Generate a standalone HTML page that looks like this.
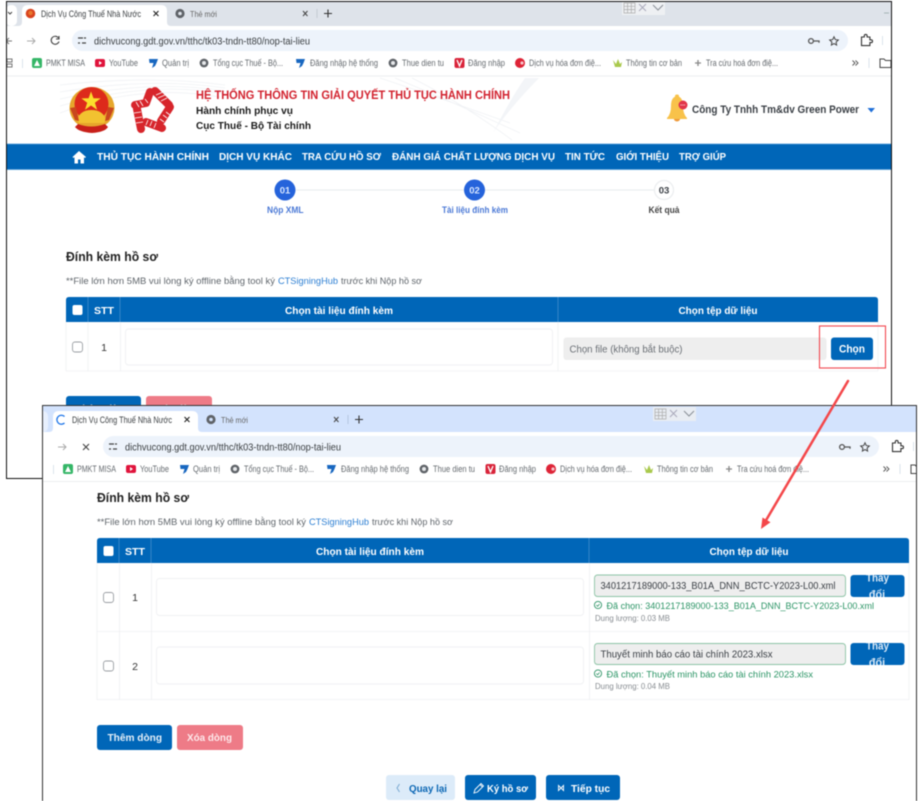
<!DOCTYPE html>
<html lang="vi">
<head>
<meta charset="utf-8">
<title>Dịch Vụ Công Thuế Nhà Nước</title>
<style>
html,body{margin:0;padding:0;background:#fff;width:923px;height:801px;overflow:hidden}
svg{display:block;position:absolute;left:0;top:0;filter:blur(.45px)}
text{font-family:"Liberation Sans",sans-serif;white-space:pre}
.b{font-weight:700}
.c{fill:#666b70;font-size:9px}
.g{fill:#60666c;font-size:9px}
.w{fill:#fff;font-weight:700;font-size:10.5px}
.n{fill:#fff;font-weight:700;font-size:10.5px}
.gi{fill:none;stroke:#555;stroke-width:1.3}
</style>
</head>
<body>
<svg width="923" height="801" viewBox="0 0 923 801" xmlns="http://www.w3.org/2000/svg">
<defs>
<clipPath id="w1"><rect x="6" y="1" width="886" height="478"/></clipPath>
<clipPath id="w2c"><rect x="11" y="0" width="875" height="76"/></clipPath>
<clipPath id="t1"><rect x="850" y="575" width="55" height="22" rx="3"/></clipPath>
<clipPath id="t2"><rect x="850" y="643" width="55" height="22" rx="3"/></clipPath>
</defs>
<rect width="923" height="801" fill="#fff"/>

<!-- WINDOW 1 -->
<g clip-path="url(#w1)">
<rect x="6" y="1" width="886" height="478" fill="#fff"/>
<rect x="6" y="1" width="886" height="25" fill="#dee3ea"/>
<rect x="6" y="5" width="11" height="21" rx="5" fill="#fff"/>
<path d="M8 12l2 2 2-2" fill="none" stroke="#444" stroke-width="1"/>
<path d="M18 26q4 0 4-4V11q0-6 6-6h133q6 0 6 6v11q0 4 4 4z" fill="#fff"/>
<circle cx="30.5" cy="13.5" r="4.8" fill="#d9431e"/><circle cx="30.5" cy="13" r="2.2" fill="#e8772c"/>
<text x="41" y="17" font-size="9.2" fill="#3c4043" textLength="100" lengthAdjust="spacingAndGlyphs">Dịch Vụ Công Thuế Nhà Nước</text>
<path d="M153.5 11l5 5M158.5 11l-5 5" stroke="#222" stroke-width="1.1"/>
<circle cx="180" cy="13.5" r="4.6" fill="#5f6368"/><circle cx="180" cy="13.5" r="1.8" fill="#dee3ea"/>
<text x="190" y="17" font-size="8.4" fill="#666" textLength="27" lengthAdjust="spacingAndGlyphs">Thẻ mới</text>
<path d="M303 11l4.500 5M307.500 11l-4.500 5" stroke="#444" stroke-width="1"/>
<path d="M317 9v9" stroke="#bfc5cc" stroke-width=".8"/>
<path d="M328 9.500v8M324 13.500h8" stroke="#333" stroke-width="1.100"/>
<rect x="622" y="2" width="43" height="13" fill="#eef0f3"/>
<path d="M624 3h11v10h-11zM624 6.300h11M624 9.600h11M627.600 3v10M631.300 3v10" fill="none" style="stroke:#aaa;stroke-width:.7"/>
<path d="M639 4l7 7M646 4l-7 7" stroke="#aab" stroke-width="1"/>
<path d="M653 5l5 5 5-5" fill="none" stroke="#8a8f96" stroke-width="1"/>
<path d="M884 13h5" stroke="#9aa" stroke-width=".8"/>
<rect x="6" y="26" width="886" height="25" fill="#fff"/>
<path d="M12 41h-5M9 38l-3 3 3 3" fill="none" stroke="#777" stroke-width="1"/>
<path d="M27 41h8M32 38l3 3-3 3" fill="none" stroke="#aaa" stroke-width="1"/>
<path d="M58.500 38a4 4 0 1 0 .5 3.500M59 36v3h-3" fill="none" stroke="#444" stroke-width="1.100"/>
<rect x="72" y="30" width="776" height="21" rx="10.500" fill="#edf3fb"/>
<path d="M78 38h5M84 38h2M78 43h2M82 43h4" stroke="#444" stroke-width="1.300"/>
<text x="94" y="44.500" font-size="9.800" fill="#3c4043" textLength="216" lengthAdjust="spacingAndGlyphs">dichvucong.gdt.gov.vn/tthc/tk03-tndn-tt80/nop-tai-lieu</text>
<circle cx="811" cy="41" r="2.400" class="gi"/><path d="M813.500 41h5.500v1.800" class="gi"/>
<path d="M834 36.800l1.300 2.800 3 .4-2.200 2.100.5 3-2.600-1.500-2.600 1.500.5-3-2.200-2.100 3-.4z" fill="none" stroke="#444" stroke-width="1"/>
<path d="M861.500 37h2.800v-1.200a1.400 1.400 0 0 1 2.800 0V37h2.800v2.800h1.200a1.400 1.400 0 0 1 0 2.800h-1.200v3h-8.400z" fill="none" stroke="#333" stroke-width="1.100"/>
<path d="M882.500 36v9" stroke="#dbe3ec" stroke-width="1"/>
<rect x="6" y="51" width="886" height="25" fill="#fff"/>
<path d="M7 76h885" stroke="#eceef0" stroke-width="1"/>
<path d="M7 59h5v3H7zM7 64h5v3H7z" fill="none" stroke="#777" stroke-width="1"/>
<path d="M22.500 59v9" stroke="#dbe3ec" stroke-width="1"/>
<rect x="32" y="58" width="10" height="10" rx="2" fill="#35b667"/><path d="M37 60l3 6h-6z" fill="#fff"/>
<text x="46" y="66" class="c" textLength="39" lengthAdjust="spacingAndGlyphs">PMKT MISA</text>
<rect x="95" y="59" width="10" height="8" rx="2" fill="#e0143c"/><path d="M99 61l3 2-3 2z" fill="#fff"/>
<text x="109" y="66" class="c" textLength="29" lengthAdjust="spacingAndGlyphs">YouTube</text>
<path d="M149 59h9l-1.500 4-1.500 3-3 2 1.500-5h-4z" fill="#1867c0"/>
<text x="162" y="66" class="c" textLength="27" lengthAdjust="spacingAndGlyphs">Quản trị</text>
<circle cx="204" cy="63" r="4.400" fill="#5f6368"/><circle cx="204" cy="63" r="2" fill="#e6e8ea"/>
<text x="213" y="66" class="c" textLength="70" lengthAdjust="spacingAndGlyphs">Tổng cục Thuế - Bộ...</text>
<path d="M296 59h9l-1.500 4-1.500 3-3 2 1.500-5h-4z" fill="#1867c0"/>
<text x="310" y="66" class="c" textLength="68" lengthAdjust="spacingAndGlyphs">Đăng nhập hệ thống</text>
<circle cx="393" cy="63" r="4.400" fill="#5f6368"/><circle cx="393" cy="63" r="2" fill="#e6e8ea"/>
<text x="402" y="66" class="c" textLength="42" lengthAdjust="spacingAndGlyphs">Thue dien tu</text>
<rect x="454.500" y="58" width="10" height="10" rx="2" fill="#d9243a"/><path d="M457 60l2.500 6 2.500-6" fill="none" stroke="#fff" stroke-width="1.300"/>
<text x="468" y="66" class="c" textLength="37" lengthAdjust="spacingAndGlyphs">Đăng nhập</text>
<circle cx="520" cy="63" r="5" fill="#de2437"/><circle cx="522" cy="63" r="1.600" fill="#f7c6cb"/>
<text x="529" y="66" class="c" textLength="72" lengthAdjust="spacingAndGlyphs">Dịch vụ hóa đơn điệ...</text>
<path d="M613 60l3 4 2-5 2 5 2-2-1 5h-6z" fill="#a9c94c"/>
<text x="626" y="66" class="c" textLength="56" lengthAdjust="spacingAndGlyphs">Thông tin cơ bản</text>
<path d="M698 60v6M695 63h6" stroke="#888" stroke-width="1.300"/>
<text x="706" y="66" class="c" textLength="72" lengthAdjust="spacingAndGlyphs">Tra cứu hoá đơn điệ...</text>
<path d="M852.500 60.500l2.500 2.500-2.500 2.500M855.500 60.500l2.500 2.500-2.500 2.500" fill="none" stroke="#555" stroke-width=".9"/>
<path d="M869 58v10" stroke="#dbe3ec" stroke-width="1"/>
<path d="M880 59h4l1.500 1.500h5.500v7h-11z" fill="none" stroke="#444" stroke-width="1"/>

<!-- Header -->
<g fill="none" stroke="#f0f2f5" stroke-width=".8">
<path d="M60 85q90-10 165 0M60 92q90-15 165-4M60 99q90-20 165-8M60 106q90-26 165-12M60 113q80-30 160-16"/>
<path d="M380 78q60 20 130 45M395 78q60 25 125 55M412 78q50 25 100 62"/>
</g>
<path d="M525 78q-14 20-32 55 14-22 46-55z" fill="#f3f5f8"/>
<!-- emblem -->
<ellipse cx="92" cy="108" rx="22.500" ry="21" fill="#e6a72c"/>
<circle cx="91.500" cy="104" r="17" fill="#dd2a1b"/>
<path d="M91 91.500l2.500 6.800 7.200.1-5.800 4.300 2.200 7-6.100-4.200-6 4.200 2.200-7-5.800-4.300 7.200-.1z" fill="#fbdf2c"/>
<path d="M77 120q3-10 14.500-10t14.500 10l-2 3H79z" fill="#f2c230"/>
<path d="M78 124q13 5 27 0l3 3q-3 5-16 6-13-1-17-6z" fill="#c8201a"/>
<path d="M70 108l5 12 4 1-3-14zM114 108l-5 12-4 1 3-14z" fill="#c9471e"/>
<!-- star logo -->
<g fill="none" stroke="#d7252b" stroke-linejoin="round" stroke-linecap="round" stroke-width="8">
<path d="M135 105l11-2 4-11"/>
<path d="M155 91l14 14"/>
<path d="M170 107l-9 14"/>
<path d="M162 128l-16-6"/>
<path d="M141 129l-4-20"/>
</g>
<g stroke="#fff" stroke-width=".8" fill="none">
<path d="M156 95l7-3M158 98l7-3M161 101l6-3M166 112l4 3M163 115l4 3M160 119l4 3M152 121l-2 5M148 120l-2 5M156 123l-2 5M134 113l7-1M135 118l7-1M136 123l7-1M136 102l3 5M140 101l3 5M145 99l3 4"/>
</g>
<text x="196" y="99" class="b" font-size="12" fill="#d2232f" textLength="314" lengthAdjust="spacingAndGlyphs">HỆ THỐNG THÔNG TIN GIẢI QUYẾT THỦ TỤC HÀNH CHÍNH</text>
<text x="196" y="114" class="b" font-size="10.300" fill="#1a1a1a" textLength="97" lengthAdjust="spacingAndGlyphs">Hành chính phục vụ</text>
<text x="196" y="129" class="b" font-size="10.300" fill="#1a1a1a" textLength="115" lengthAdjust="spacingAndGlyphs">Cục Thuế - Bộ Tài chính</text>
<path d="M677 96q-6 1-6 10 0 8-4 12v1h20v-1q-4-4-4-12 0-9-6-10z" fill="#f8c24a"/>
<ellipse cx="677" cy="96" rx="2" ry="1.500" fill="#f8c24a"/><path d="M674 119a3 2.500 0 0 0 6 0z" fill="#ef9a3a"/>
<circle cx="683" cy="105" r="4.500" fill="#e2354a"/><path d="M680.500 105h5" stroke="#fff" stroke-width=".8" stroke-dasharray="1 .6"/>
<text x="692" y="113" class="b" font-size="11" fill="#3a3f45" textLength="167" lengthAdjust="spacingAndGlyphs">Công Ty Tnhh Tm&amp;dv Green Power</text>
<path d="M867.500 108h7.500l-3.700 4.500z" fill="#1f6fd8"/>

<!-- Nav -->
<rect x="6" y="144" width="886" height="25.500" fill="#0066b8"/>
<path d="M6 144h886M6 169.500h886" stroke="#4d9bd8" stroke-width=".7"/>
<path d="M79 151l-6.500 6 1 1 1-.8v6.300h3.500v-4h2.500v4h3.500v-6.300l1 .8 1-1z" fill="#fff"/>
<text x="97" y="160" class="n" textLength="112" lengthAdjust="spacingAndGlyphs">THỦ TỤC HÀNH CHÍNH</text>
<text x="219" y="160" class="n" textLength="73" lengthAdjust="spacingAndGlyphs">DỊCH VỤ KHÁC</text>
<text x="302" y="160" class="n" textLength="79" lengthAdjust="spacingAndGlyphs">TRA CỨU HỒ SƠ</text>
<text x="392" y="160" class="n" textLength="163" lengthAdjust="spacingAndGlyphs">ĐÁNH GIÁ CHẤT LƯỢNG DỊCH VỤ</text>
<text x="565" y="160" class="n" textLength="40" lengthAdjust="spacingAndGlyphs">TIN TỨC</text>
<text x="616" y="160" class="n" textLength="53" lengthAdjust="spacingAndGlyphs">GIỚI THIỆU</text>
<text x="679" y="160" class="n" textLength="47" lengthAdjust="spacingAndGlyphs">TRỢ GIÚP</text>

<!-- Stepper -->
<path d="M296 190h168M485 190h169" stroke="#eceef0" stroke-width="1.300"/>
<circle cx="285" cy="190" r="10.500" fill="#2563db"/>
<text x="285" y="193.500" text-anchor="middle" class="b" font-size="9.500" fill="#d8e6ff">01</text>
<circle cx="474.500" cy="190" r="10.500" fill="#2563db"/>
<text x="474.500" y="193.500" text-anchor="middle" class="b" font-size="9.500" fill="#d8e6ff">02</text>
<circle cx="664" cy="190" r="9.500" fill="#fff" stroke="#eceef0" stroke-width="1.300"/>
<text x="664" y="193.500" text-anchor="middle" class="b" font-size="9.500" fill="#3a3f45">03</text>
<text x="267" y="213" class="b" font-size="8.800" fill="#4b79d6" textLength="36.500" lengthAdjust="spacingAndGlyphs">Nộp XML</text>
<text x="442" y="213" class="b" font-size="8.800" fill="#4b79d6" textLength="66" lengthAdjust="spacingAndGlyphs">Tài liệu đính kèm</text>
<text x="648.500" y="213" class="b" font-size="8.800" fill="#444" textLength="31" lengthAdjust="spacingAndGlyphs">Kết quả</text>

<!-- Content 1 -->
<text x="66" y="261" class="b" font-size="12.500" fill="#222" textLength="92" lengthAdjust="spacingAndGlyphs">Đính kèm hồ sơ</text>
<text x="66" y="284" class="g" textLength="209" lengthAdjust="spacingAndGlyphs">**File lớn hơn 5MB vui lòng ký offline bằng tool ký</text>
<text x="278" y="284" font-size="9.500" fill="#2d7fd3" textLength="60" lengthAdjust="spacingAndGlyphs">CTSigningHub</text>
<text x="341" y="284" class="g" textLength="81" lengthAdjust="spacingAndGlyphs">trước khi Nộp hồ sơ</text>
<path d="M66 322v-22q0-3 3-3h806q3 0 3 3v22z" fill="#0066b8"/>
<path d="M88 297v25M120 297v25M558 297v25" stroke="#4d93cf" stroke-width=".7"/>
<rect x="72.500" y="305" width="10" height="10" rx="2" fill="#fff"/>
<text x="94" y="314" class="w" textLength="20" lengthAdjust="spacingAndGlyphs">STT</text>
<text x="285" y="314" class="w" textLength="108" lengthAdjust="spacingAndGlyphs">Chọn tài liệu đính kèm</text>
<text x="678.500" y="314" class="w" textLength="79" lengthAdjust="spacingAndGlyphs">Chọn tệp dữ liệu</text>
<path d="M66 371h812M66 322v49M88 322v49M120.500 322v49M558 322v49M878 322v49" stroke="#eff1f3" stroke-width=".8"/>
<rect x="72.500" y="342" width="10" height="10" rx="2.500" fill="#fff" stroke="#9a9ea3" stroke-width=".9"/>
<text x="104" y="351" text-anchor="middle" font-size="10.500" fill="#333">1</text>
<rect x="125.500" y="329" width="427" height="36" rx="3" fill="#fff" stroke="#f0f1f3" stroke-width=".9"/>
<rect x="563.500" y="337.500" width="263" height="22.500" rx="3" fill="#eeeeee"/>
<text x="569.500" y="352.500" font-size="9.800" fill="#6a6f75" textLength="113" lengthAdjust="spacingAndGlyphs">Chọn file (không bắt buộc)</text>
<rect x="831" y="337.500" width="42" height="22.500" rx="3" fill="#0066b8"/>
<text x="839" y="352.500" class="b" font-size="10.800" fill="#fff" textLength="26" lengthAdjust="spacingAndGlyphs">Chọn</text>
<rect x="819.500" y="326" width="66" height="42" fill="none" stroke="#f2474f" stroke-width="1.100"/>
<rect x="66" y="396" width="75" height="25" rx="3" fill="#0066b8"/>
<rect x="146" y="396" width="66" height="25" rx="3" fill="#ee7b87"/>
<text x="76" y="412" class="w" textLength="55" lengthAdjust="spacingAndGlyphs">Thêm dòng</text>
<text x="156" y="412" class="w" textLength="45" lengthAdjust="spacingAndGlyphs">Xóa dòng</text>
</g>
<path d="M6.500 479V1.500H891.500V479M6 478.500H42" fill="none" stroke="#111" stroke-width="1"/>

<!-- WINDOW 2 -->
<rect x="42" y="405" width="875" height="396" fill="#fff"/>
<g transform="translate(31,406)" clip-path="url(#w2c)">
<rect x="6" y="0" width="886" height="26" fill="#d3e3fd"/>
<rect x="6" y="5" width="11" height="21" rx="5" fill="#e8f0fd"/>
<path d="M18 26q4 0 4-4V11q0-6 6-6h133q6 0 6 6v11q0 4 4 4z" fill="#fff"/>
<path d="M33.500 10.500a4.500 4.500 0 1 0 0 6.500" fill="none" stroke="#1a73e8" stroke-width="1.300"/>
<text x="41" y="17" font-size="9.200" fill="#3c4043" textLength="100" lengthAdjust="spacingAndGlyphs">Dịch Vụ Công Thuế Nhà Nước</text>
<path d="M153.500 11l5 5M158.500 11l-5 5" stroke="#222" stroke-width="1.100"/>
<circle cx="180" cy="13.500" r="4.600" fill="#5f6368"/><circle cx="180" cy="13.500" r="1.800" fill="#d3e3fd"/>
<text x="190" y="17" font-size="8.400" fill="#666" textLength="27" lengthAdjust="spacingAndGlyphs">Thẻ mới</text>
<path d="M303 11l4.500 5M307.500 11l-4.500 5" stroke="#444" stroke-width="1"/>
<path d="M317 9v9" stroke="#aebfd8" stroke-width=".8"/>
<path d="M328 9.500v8M324 13.500h8" stroke="#333" stroke-width="1.100"/>
<rect x="622" y="1" width="43" height="14" fill="#e9edf3"/>
<path d="M624 3h11v10h-11zM624 6.300h11M624 9.600h11M627.600 3v10M631.300 3v10" fill="none" style="stroke:#aaa;stroke-width:.7"/>
<path d="M639 4l7 7M646 4l-7 7" stroke="#aab" stroke-width="1"/>
<path d="M653 5l5 5 5-5" fill="none" stroke="#8a8f96" stroke-width="1"/>
<rect x="6" y="26" width="886" height="25" fill="#fff"/>
<path d="M27 41h8M32 38l3 3-3 3" fill="none" stroke="#aaa" stroke-width="1"/>
<path d="M52 38l6 6M58 38l-6 6" stroke="#444" stroke-width="1.100"/>
<rect x="72" y="30" width="776" height="21" rx="10.500" fill="#edf3fb"/>
<path d="M78 38h5M84 38h2M78 43h2M82 43h4" stroke="#444" stroke-width="1.300"/>
<text x="94" y="44.500" font-size="9.800" fill="#3c4043" textLength="216" lengthAdjust="spacingAndGlyphs">dichvucong.gdt.gov.vn/tthc/tk03-tndn-tt80/nop-tai-lieu</text>
<circle cx="811" cy="41" r="2.400" class="gi"/><path d="M813.500 41h5.500v1.800" class="gi"/>
<path d="M834 36.800l1.300 2.800 3 .4-2.200 2.100.5 3-2.600-1.500-2.600 1.500.5-3-2.200-2.100 3-.4z" fill="none" stroke="#444" stroke-width="1"/>
<path d="M861.500 37h2.800v-1.200a1.400 1.400 0 0 1 2.800 0V37h2.800v2.800h1.200a1.400 1.400 0 0 1 0 2.800h-1.200v3h-8.400z" fill="none" stroke="#333" stroke-width="1.100"/>
<path d="M882.500 36v9" stroke="#dbe3ec" stroke-width="1"/>
<rect x="6" y="51" width="886" height="25" fill="#fff"/>
<path d="M7 75.500h885" stroke="#eceef0" stroke-width="1"/>
<path d="M22.500 59v9" stroke="#dbe3ec" stroke-width="1"/>
<rect x="32" y="58" width="10" height="10" rx="2" fill="#35b667"/><path d="M37 60l3 6h-6z" fill="#fff"/>
<text x="46" y="66" class="c" textLength="39" lengthAdjust="spacingAndGlyphs">PMKT MISA</text>
<rect x="95" y="59" width="10" height="8" rx="2" fill="#e0143c"/><path d="M99 61l3 2-3 2z" fill="#fff"/>
<text x="109" y="66" class="c" textLength="29" lengthAdjust="spacingAndGlyphs">YouTube</text>
<path d="M149 59h9l-1.500 4-1.500 3-3 2 1.500-5h-4z" fill="#1867c0"/>
<text x="162" y="66" class="c" textLength="27" lengthAdjust="spacingAndGlyphs">Quản trị</text>
<circle cx="204" cy="63" r="4.400" fill="#5f6368"/><circle cx="204" cy="63" r="2" fill="#e6e8ea"/>
<text x="213" y="66" class="c" textLength="70" lengthAdjust="spacingAndGlyphs">Tổng cục Thuế - Bộ...</text>
<path d="M296 59h9l-1.500 4-1.500 3-3 2 1.500-5h-4z" fill="#1867c0"/>
<text x="310" y="66" class="c" textLength="68" lengthAdjust="spacingAndGlyphs">Đăng nhập hệ thống</text>
<circle cx="393" cy="63" r="4.400" fill="#5f6368"/><circle cx="393" cy="63" r="2" fill="#e6e8ea"/>
<text x="402" y="66" class="c" textLength="42" lengthAdjust="spacingAndGlyphs">Thue dien tu</text>
<rect x="454.500" y="58" width="10" height="10" rx="2" fill="#d9243a"/><path d="M457 60l2.500 6 2.500-6" fill="none" stroke="#fff" stroke-width="1.300"/>
<text x="468" y="66" class="c" textLength="37" lengthAdjust="spacingAndGlyphs">Đăng nhập</text>
<circle cx="520" cy="63" r="5" fill="#de2437"/><circle cx="522" cy="63" r="1.600" fill="#f7c6cb"/>
<text x="529" y="66" class="c" textLength="72" lengthAdjust="spacingAndGlyphs">Dịch vụ hóa đơn điệ...</text>
<path d="M613 60l3 4 2-5 2 5 2-2-1 5h-6z" fill="#a9c94c"/>
<text x="626" y="66" class="c" textLength="56" lengthAdjust="spacingAndGlyphs">Thông tin cơ bản</text>
<path d="M698 60v6M695 63h6" stroke="#888" stroke-width="1.300"/>
<text x="706" y="66" class="c" textLength="72" lengthAdjust="spacingAndGlyphs">Tra cứu hoá đơn điệ...</text>
<path d="M852.500 60.500l2.500 2.500-2.500 2.500M855.500 60.500l2.500 2.500-2.500 2.500" fill="none" stroke="#555" stroke-width=".9"/>
<path d="M869 58v10" stroke="#dbe3ec" stroke-width="1"/>
<path d="M880 59h4l1.500 1.500h5.500v7h-11z" fill="none" stroke="#444" stroke-width="1"/>
</g>

<!-- Content 2 -->
<text x="97" y="502" class="b" font-size="12.500" fill="#222" textLength="92" lengthAdjust="spacingAndGlyphs">Đính kèm hồ sơ</text>
<text x="97" y="525" class="g" textLength="209" lengthAdjust="spacingAndGlyphs">**File lớn hơn 5MB vui lòng ký offline bằng tool ký</text>
<text x="309" y="525" font-size="9.500" fill="#2d7fd3" textLength="60" lengthAdjust="spacingAndGlyphs">CTSigningHub</text>
<text x="372" y="525" class="g" textLength="81" lengthAdjust="spacingAndGlyphs">trước khi Nộp hồ sơ</text>
<path d="M97 563v-22q0-3 3-3h806q3 0 3 3v22z" fill="#0066b8"/>
<path d="M119 538v25M151 538v25M589 538v25" stroke="#4d93cf" stroke-width=".7"/>
<rect x="103.500" y="546" width="10" height="10" rx="2" fill="#fff"/>
<text x="125" y="555" class="w" textLength="20" lengthAdjust="spacingAndGlyphs">STT</text>
<text x="316" y="555" class="w" textLength="108" lengthAdjust="spacingAndGlyphs">Chọn tài liệu đính kèm</text>
<text x="709.500" y="555" class="w" textLength="79" lengthAdjust="spacingAndGlyphs">Chọn tệp dữ liệu</text>
<path d="M97 631.500h812M97 699.500h812M97 563v137M119.500 563v137M151.500 563v137M589.500 563v137M909 563v137" stroke="#eff1f3" stroke-width=".8"/>
<rect x="103.500" y="592.500" width="10" height="10" rx="2.500" fill="#fff" stroke="#9a9ea3" stroke-width=".9"/>
<rect x="103.500" y="661" width="10" height="10" rx="2.500" fill="#fff" stroke="#9a9ea3" stroke-width=".9"/>
<text x="135" y="601" text-anchor="middle" font-size="10.500" fill="#333">1</text>
<text x="135" y="670" text-anchor="middle" font-size="10.500" fill="#333">2</text>
<rect x="156.500" y="578.500" width="427" height="37" rx="3" fill="#fff" stroke="#f0f1f3" stroke-width=".9"/>
<rect x="156.500" y="647" width="427" height="37" rx="3" fill="#fff" stroke="#f0f1f3" stroke-width=".9"/>

<rect x="594.500" y="575" width="251" height="21.500" rx="3" fill="#eeeeee" stroke="#8dc4a6" stroke-width=".9"/>
<text x="600.500" y="589" font-size="9.800" fill="#3a3f45" textLength="235" lengthAdjust="spacingAndGlyphs">3401217189000-133_B01A_DNN_BCTC-Y2023-L00.xml</text>
<g clip-path="url(#t1)"><rect x="850.500" y="575" width="54" height="22" rx="3" fill="#0066b8"/>
<text x="877.500" y="581.500" text-anchor="middle" class="b" font-size="10.800" fill="#dbe9f6" textLength="23" lengthAdjust="spacingAndGlyphs">Thay</text>
<text x="877" y="598" text-anchor="middle" class="b" font-size="10.800" fill="#dbe9f6">đổi</text></g>
<circle cx="598" cy="605" r="3.600" fill="none" stroke="#2f9467" stroke-width=".9"/><path d="M596.300 605l1.300 1.300 2-2.300" fill="none" stroke="#2f9467" stroke-width=".8"/>
<text x="606.500" y="609" font-size="9.300" fill="#2c9566" textLength="267.500" lengthAdjust="spacingAndGlyphs">Đã chọn: 3401217189000-133_B01A_DNN_BCTC-Y2023-L00.xml</text>
<text x="595" y="621" font-size="7.800" fill="#888d92" textLength="75" lengthAdjust="spacingAndGlyphs">Dung lượng: 0.03 MB</text>

<rect x="594.500" y="643.500" width="251" height="21" rx="3" fill="#eeeeee" stroke="#8dc4a6" stroke-width=".9"/>
<text x="600.500" y="657.500" font-size="9.800" fill="#3a3f45" textLength="172" lengthAdjust="spacingAndGlyphs">Thuyết minh báo cáo tài chính 2023.xlsx</text>
<g clip-path="url(#t2)"><rect x="850.500" y="643" width="54" height="22" rx="3" fill="#0066b8"/>
<text x="877.500" y="649.500" text-anchor="middle" class="b" font-size="10.800" fill="#dbe9f6" textLength="23" lengthAdjust="spacingAndGlyphs">Thay</text>
<text x="877" y="666" text-anchor="middle" class="b" font-size="10.800" fill="#dbe9f6">đổi</text></g>
<circle cx="598" cy="673.500" r="3.600" fill="none" stroke="#2f9467" stroke-width=".9"/><path d="M596.300 673.500l1.300 1.300 2-2.300" fill="none" stroke="#2f9467" stroke-width=".8"/>
<text x="606.500" y="677.500" font-size="9.300" fill="#2c9566" textLength="206.500" lengthAdjust="spacingAndGlyphs">Đã chọn: Thuyết minh báo cáo tài chính 2023.xlsx</text>
<text x="595" y="689" font-size="7.800" fill="#888d92" textLength="75" lengthAdjust="spacingAndGlyphs">Dung lượng: 0.04 MB</text>

<rect x="97" y="725" width="75" height="25" rx="3" fill="#0066b8"/>
<text x="107.500" y="741" class="b" font-size="10.500" fill="#e4eff8" textLength="54.500" lengthAdjust="spacingAndGlyphs">Thêm dòng</text>
<rect x="177" y="725" width="66" height="25" rx="3" fill="#ee7b87"/>
<text x="187" y="741" class="b" font-size="10.500" fill="#fde9eb" textLength="45" lengthAdjust="spacingAndGlyphs">Xóa dòng</text>

<rect x="386" y="775" width="69" height="25" rx="3" fill="#dcebf9"/>
<path d="M399.500 784l-2.500 4 2.500 4" fill="none" stroke="#7aa9d2" stroke-width="1"/>
<text x="409" y="792" class="b" font-size="10.500" fill="#0a66b4" textLength="38" lengthAdjust="spacingAndGlyphs">Quay lại</text>
<rect x="465" y="775" width="71" height="25" rx="3" fill="#0066b8"/>
<path d="M474 793l1-3.500 6-6 2.500 2.500-6 6zM480 784.500l2.500 2.500" fill="none" stroke="#fff" stroke-width=".9"/>
<text x="487" y="792" class="b" font-size="10.500" fill="#fff" textLength="41" lengthAdjust="spacingAndGlyphs">Ký hồ sơ</text>
<rect x="546" y="775" width="74" height="25" rx="3" fill="#0066b8"/>
<path d="M558.500 785.500v5l2.500-2.500zM563.500 785.500l-2.500 2.500 2.500 2.500z" fill="none" stroke="#fff" stroke-width=".9"/>
<text x="571" y="792" class="b" font-size="10.500" fill="#fff" textLength="39" lengthAdjust="spacingAndGlyphs">Tiếp tục</text>

<path d="M42.500 801V405.500H916.500V801" fill="none" stroke="#333" stroke-width="1"/>

<!-- Arrow -->
<path d="M848 381L765 522" fill="none" stroke="#f4474a" stroke-width="2.500" stroke-linecap="round"/>
<path d="M761 529l1.500-11.500 8 4.700z" fill="#f4474a"/>
</svg>
</body>
</html>
